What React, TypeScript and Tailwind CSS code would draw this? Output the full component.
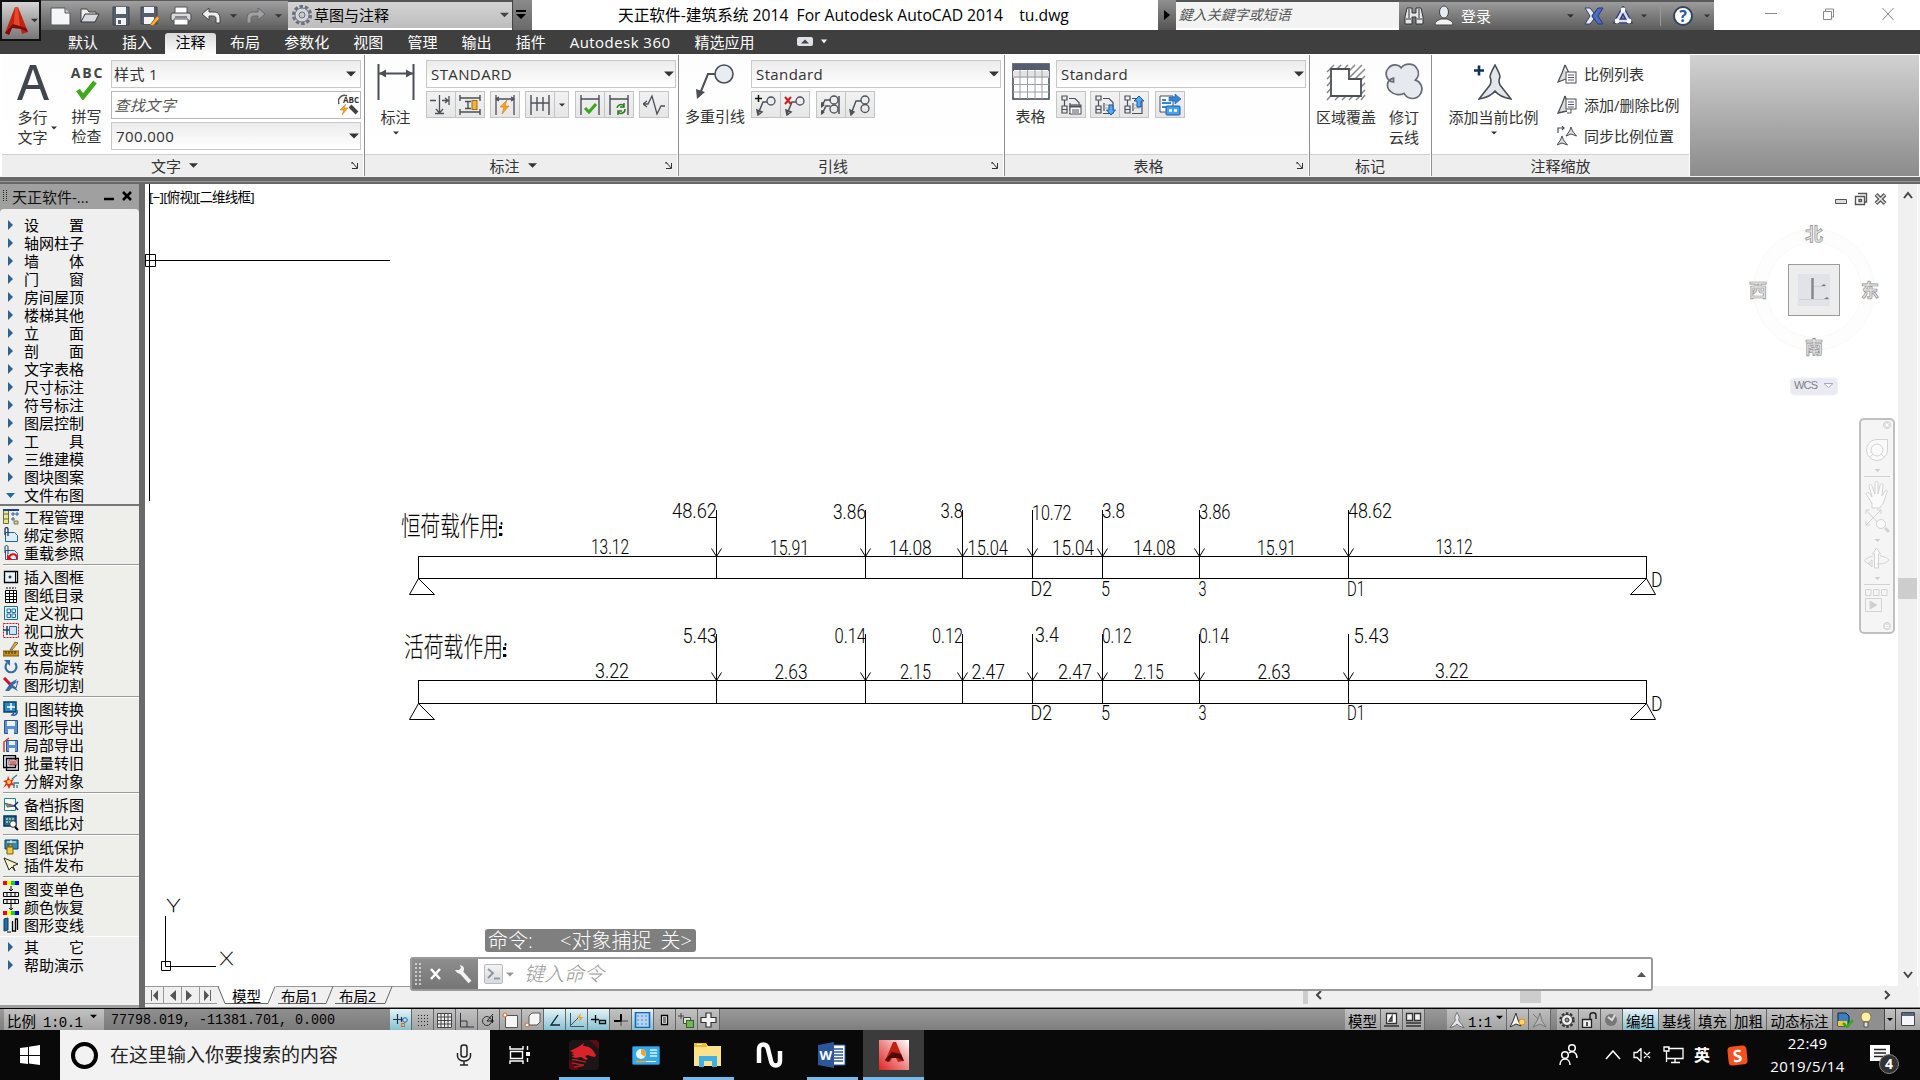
import type { ReactNode } from "react";

type IconProps = { w?: number; h?: number; vw?: number; vh?: number; className?: string; children?: ReactNode };

function Svg({ w = 22, h, vw, vh, className = "", children }: IconProps) {
  const hh = h ?? w;
  return (
    <svg width={w} height={hh} viewBox={`0 0 ${vw ?? w} ${vh ?? hh}`} className={"block shrink-0 " + className} fill="none">
      {children}
    </svg>
  );
}

function Caret({ className = "text-[#333]", w = 9, h = 5 }: { className?: string; w?: number; h?: number }) {
  return (
    <Svg w={w} h={h} vw={10} vh={5} className={className}>
      <path d="M0 0h10L5 5z" fill="currentColor" />
    </Svg>
  );
}

/* ---------- title bar ---------- */

function QuickAccess() {
  return (
    <div className="flex h-[30px] w-[247px] items-center border-t border-[#5a5a5a] bg-gradient-to-b from-[#a0a0a0] to-[#5c5c5c] pl-[9px]">
      <Svg w={22} h={20} className="mr-[7px]">
        <path d="M1 2h14l5 5v12H1z" fill="#f4f6f9" stroke="#555" />
        <path d="M15 2v5h5" stroke="#555" fill="#ccd" />
      </Svg>
      <Svg w={22} h={20} className="mr-[10px]">
        <path d="M2 16V3h6l2 3h7v3" fill="#eee" stroke="#444" />
        <path d="M2 16l4-8h14l-4 8z" fill="#d5d9e0" stroke="#333" />
      </Svg>
      <Svg w={20} h={20} className="mr-[8px]">
        <path d="M2 1h16v18H2z" fill="#565d6b" stroke="#3c4350" />
        <path d="M5 1h10v7H5zM5 12h10v7H5z" fill="#f1f3f6" />
        <path d="M7 14h3v4H7z" fill="#565d6b" />
      </Svg>
      <Svg w={22} h={20} className="mr-[9px]">
        <path d="M2 1h16v17H2z" fill="#565d6b" stroke="#3c4350" />
        <path d="M5 1h10v6H5zM5 11h10v7H5z" fill="#f1f3f6" />
        <path d="M11 19l7-9 3 2-7 8z" fill="#f2b43c" stroke="#a15a1c" />
      </Svg>
      <Svg w={22} h={20} className="mr-[9px]">
        <path d="M5 1h12v7H5z" fill="#fff" stroke="#555" />
        <rect x="1" y="7" width="20" height="8" rx="2" fill="#d8dade" stroke="#444" />
        <path d="M4 13h14v6H4z" fill="#fff" stroke="#555" />
        <path d="M5 11h12" stroke="#333" />
      </Svg>
      <Svg w={20} h={20} className="mr-[9px]">
        <path d="M1 8l7-6v4h5c4 0 6 3 6 6v5h-4v-4c0-2-1-3-3-3H8v4z" fill="#eef0f4" stroke="#444" />
      </Svg>
      <Caret className="mr-[9px] text-[#333]" w={7} h={4} />
      <Svg w={20} h={20} className="mr-[9px]">
        <path d="M19 8l-7-6v4H7c-4 0-6 3-6 6v5h4v-4c0-2 1-3 3-3h4v4z" fill="#9fa1a5" stroke="#666" />
      </Svg>
      <Caret className="text-[#333]" w={7} h={4} />
    </div>
  );
}

function TitleBar() {
  return (
    <div className="flex h-[30px] bg-white pl-[41px] text-[15px] leading-none">
      <QuickAccess />
      <div className="flex h-[28px] w-[224px] items-center border-t-2 border-[#555] bg-gradient-to-b from-[#d4d4d4] to-[#bdbdbd] px-[3px]">
        <Svg w={22} h={22}>
          <circle cx="11" cy="11" r="8.6" stroke="#69707d" strokeWidth="3" strokeDasharray="3.4 2" />
          <circle cx="11" cy="11" r="7" fill="#d3d6db" stroke="#69707d" />
          <circle cx="11" cy="11" r="3" fill="#c9c9c9" stroke="#69707d" />
        </Svg>
        <span className="ml-[1px] grow text-black">草图与注释</span>
        <Caret className="text-[#444]" w={9} h={6} />
      </div>
      <div className="flex h-[30px] w-[20px] items-center justify-center border-l border-[#444] bg-gradient-to-b from-[#8a8a8a] to-[#6a6a6a] pr-[4px]">
        <Svg w={10} h={10}>
          <path d="M0 0h10v2H0zM0 4h10L5 9z" fill="#000" />
        </Svg>
      </div>
      <div className="flex h-[30px] w-[626px] items-center pl-[86px] text-[16px] text-black">
        <span className="origin-left scale-x-[0.980] whitespace-pre">天正软件-建筑系统 2014  For Autodesk AutoCAD 2014    tu.dwg</span>
      </div>
      <div className="flex h-[30px] w-[18px] items-center justify-center bg-gradient-to-b from-[#909090] to-[#555]">
        <Svg w={6} h={10}>
          <path d="M0 0v10l6-5z" fill="#000" />
        </Svg>
      </div>
      <div className="flex h-[28px] w-[223px] items-center border-t-2 border-[#555] bg-[#f3f3f3] pl-[4px] text-[14px] text-[#555]">
        <span className="block [transform:skewX(-16deg)]">鍵入关鍵字或短语</span>
      </div>
      <div className="flex h-[30px] w-[315px] items-center border-t-2 border-[#5a5a5a] bg-gradient-to-b from-[#9c9c9c] to-[#5c5c5c]">
        <Svg w={20} h={20} className="ml-[5px]">
          <path d="M3 2h5v5h4V2h5l2 9v7h-7v-7H8v7H1v-7z" fill="#e2e6ea" stroke="#333" />
          <path d="M2 13h5M13 13h5M5 3v9M15 3v9" stroke="#333" />
        </Svg>
        <Svg w={20} h={22} className="ml-[10px]">
          <ellipse cx="10" cy="7" rx="4.5" ry="6" fill="#e4ebf2" stroke="#444" />
          <path d="M1 20c0-4 4-5 6-6h6c2 1 6 2 6 6z" fill="#f3f3f3" stroke="#444" />
        </Svg>
        <span className="ml-[7px] w-[106px] text-white">登录</span>
        <Caret className="text-[#333]" w={7} h={4} />
        <Svg w={20} h={18} className="ml-[10px]">
          <path d="M1 1h5l4 5-2 3 2 3-4 5H1l5-8z" fill="#e4e9f5" stroke="#33406c" />
          <path d="M19 1h-5l-6 8 6 8h5l-5-8z" fill="#4c6cc0" stroke="#25397a" />
        </Svg>
        <Svg w={20} h={20} className="ml-[9px]">
          <path d="M10 4L4 15h12z" stroke="#2c3a73" strokeWidth="5" />
          <path d="M10 4L4 15h12z" stroke="#d6def5" strokeWidth="2.6" />
          <circle cx="10" cy="4" r="2.4" fill="#fff" />
          <circle cx="4" cy="15" r="2.4" fill="#fff" />
          <circle cx="16" cy="15" r="2.4" fill="#fff" />
        </Svg>
        <Caret className="ml-[8px] text-[#333]" w={6} h={4} />
        <div className="ml-[13px] h-[20px] w-px bg-[#999]" />
        <div className="ml-[12px] flex size-[20px] items-center justify-center rounded-full border-2 border-[#33445e] bg-white text-[16px] font-bold text-[#2457b8]">?</div>
        <Caret className="ml-[11px] text-[#333]" w={6} h={4} />
      </div>
      <Svg w={206} h={30}>
        <path d="M51 13.500h12M109.500 11.500h8v8h-8zM111.500 11v-2h8v8h-2M168.500 8l11 12M179.500 8l-11 12" stroke="#888" />
      </Svg>
    </div>
  );
}

function AppButton() {
  return (
    <div className="absolute top-0 left-0 flex h-[41px] w-[41px] items-center border-2 border-[#111] bg-gradient-to-b from-[#d5d5d5] to-[#777] pl-[2px]">
      <Svg w={25} h={30} vw={25} vh={30}>
        <path d="M11 1h3l10 25-6 2-2-7-8 1-3 7-4-2z" fill="#c5220f" />
        <path d="M11 1l3 0 2 20-8 1 2-5z" fill="#e4492c" />
        <path d="M1 27l8-9 13 4 2 4-7-3-9-1-3 7z" fill="#7a0d08" />
      </Svg>
      <Caret className="ml-[2px] text-[#333]" w={7} h={5} />
    </div>
  );
}

const tabsLeft = ["默认", "插入"];
const tabsRight = ["布局", "参数化", "视图", "管理", "输出", "插件", "Autodesk 360", "精选应用"];

function TabBar() {
  return (
    <div className="flex h-[24px] items-center bg-[#3f3f3f] pl-[56px] text-[15px] leading-none text-white">
      {tabsLeft.map((t) => (
        <span key={t} className="px-[12px] pt-px">{t}</span>
      ))}
      <span className="mt-[3px] ml-[1px] flex h-[21px] w-[51px] items-center justify-center rounded-t-[3px] bg-gradient-to-b from-[#d9d9d9] to-white pb-[2px] text-black">注释</span>
      <span className="w-[2px]" />
      {tabsRight.map((t) => (
        <span key={t} className={"px-[12.050px] pt-px whitespace-nowrap " + (t.startsWith("A") ? "tracking-[0.450px]" : "")}>{t}</span>
      ))}
      <Svg w={30} h={10} className="ml-[30px]">
        <rect width="16" height="9" rx="2" fill="#dfe1e6" />
        <path d="M4 6.500h8L8 2.500z" fill="#444" />
        <path d="M24 2.500h6l-3 4z" fill="#fff" />
      </Svg>
    </div>
  );
}

/* ---------- ribbon ---------- */

function Combo({ text, search = false, inset = false }: { text: string; search?: boolean; inset?: boolean }) {
  return (
    <div className={"flex h-[28px] w-[250px] items-center border text-[15px] tracking-[0.400px] " + (inset ? "pl-[2px] " : "pl-[4px] ") + (search ? "border-[#b9b9b9] bg-white text-[14px] text-[#555]" : "border-[#c9c9c9] bg-gradient-to-b from-[#ececec] to-white text-[#333]")}>
      <span className={search ? "block [transform:skewX(-16deg)]" : ""}>{text}</span>
      <span className="grow" />
      {search ? (
        <Svg w={22} h={22}>
          <path d="M1 10a6 6 0 0 1 8-8" stroke="#555" strokeWidth="1.500" />
          <text x="5" y="9" fontSize="8" fontWeight="700" fill="#333" letterSpacing="0">ABC</text>
          <path d="M8 10l-6 6h4l-2 5 6-7H6z" fill="#f5a623" stroke="#c86a10" strokeWidth=".5" />
          <path d="M12 12l7 7" stroke="#444" strokeWidth="4" />
        </Svg>
      ) : (
        <Caret w={10} h={6} className={inset ? "mr-[4px] text-[#333]" : "mr-px text-[#333]"} />
      )}
    </div>
  );
}

function Btn({ children, w = "w-[30px]" }: { children: ReactNode; w?: string }) {
  return (
    <div className={"-mr-px flex h-[27px] items-center justify-center border border-[#c4c4c4] bg-gradient-to-b from-[#f2f2f2] to-[#e6e6e6] " + w}>{children}</div>
  );
}

function Panel({ title, width, menu = false, launcher = false, children }: { title: string; width: string; menu?: boolean; launcher?: boolean; children: ReactNode }) {
  return (
    <section className={"flex flex-col border-r border-[#8f8f8f] " + width}>
      <div className="flex h-[100px] grow bg-gradient-to-b from-[#fdfdfd] to-white">{children}</div>
      <div className="mr-px flex h-[22px] items-center justify-center border-t border-[#d0d0d0] bg-[#eeeeee] text-[15px] text-[#333]">
        <span className={"flex grow items-center justify-center gap-[8px] " + (launcher ? "pr-[4px]" : "")}>
          {title}
          {menu && <Caret w={9} h={5} />}
        </span>
        {launcher && (
          <Svg w={7} h={7} className="mr-[5px]">
            <path d="M0 1h2M1 0l5 6M6.500 1v5.500H1" stroke="#333" />
          </Svg>
        )}
      </div>
    </section>
  );
}

const ink = "#4a4f58";

function IconDim({ kind }: { kind: string }) {
  return (
    <Svg w={22} h={22}>
      {kind === "jog" && <path d="M0 6.500h6M9.500 1v18M5 19.500h9M6 15l3.500 4 3.500-4M12 6.500h6M15 4l3 2.500-3 2.500M19 2v9" stroke={ink} strokeWidth="1.300" />}
      {kind === "quick" && (
        <>
          <path d="M1 1v6M21 1v6M1 4h20M1 15v6M21 15v6M1 18h20M6 7.500h6M6 14.500h6M9 7.500v7" stroke={ink} strokeWidth="1.400" />
          <rect x="13" y="6.500" width="5" height="9" fill="#f0b43a" stroke="#a26a12" />
        </>
      )}
      {kind === "flash" && (
        <>
          <path d="M2 1v20M20 1v20M2 5h18M5 3L2 5l3 2M17 3l3 2-3 2" stroke={ink} strokeWidth="1.300" />
          <path d="M13 6l-7 7h4l-2 7 7-8h-4z" fill="#f6a21d" stroke="#d47a10" strokeWidth=".6" />
        </>
      )}
      {kind === "cont" && <path d="M2 1v20M8 3v14M14 3v14M20 1v20M2 9h18" stroke={ink} strokeWidth="1.400" />}
      {kind === "check" && (
        <>
          <path d="M2 1v20M20 1v20M2 5h18" stroke={ink} strokeWidth="1.400" />
          <path d="M6 14l4 4 7-8" stroke="#3aa61a" strokeWidth="3" />
        </>
      )}
      {kind === "update" && (
        <>
          <path d="M2 1v20M20 1v20M2 5h18" stroke={ink} strokeWidth="1.400" />
          <path d="M9 14a4 4 0 0 1 7-2M17 15a4 4 0 0 1-7 3M16 9v4h-4M10 21v-4h4" stroke="#2c7a1e" strokeWidth="1.500" />
        </>
      )}
      {kind === "wave" && <path d="M0 10h5l4-8 5 18 4-8h4M0 10l4-3M0 10l4 3" stroke={ink} strokeWidth="1.300" />}
    </Svg>
  );
}

function IconLeader({ kind }: { kind: string }) {
  return (
    <Svg w={22} h={22}>
      {kind === "two" && (
        <>
          <path d="M2 12l3-6h6M2 20l4-8h4M2 12l0-4M2 20l0-4M19 2v18" stroke={ink} strokeWidth="1.500" />
          <circle cx="14" cy="6" r="4" stroke={ink} strokeWidth="1.300" />
          <circle cx="14" cy="15" r="4" stroke={ink} strokeWidth="1.300" />
          <path d="M1 9l4 2-4 3zM1 17l4 1-4 3z" fill={ink} />
        </>
      )}
      {kind === "eight" && (
        <>
          <path d="M2 20L7 7h5M1 16l1 5 3-3z" stroke={ink} strokeWidth="1.400" />
          <circle cx="16" cy="6" r="4" stroke={ink} strokeWidth="1.300" />
          <circle cx="16" cy="14.500" r="4" stroke={ink} strokeWidth="1.300" />
        </>
      )}
      {(kind === "add" || kind === "del") && (
        <>
          <path d="M3 20l5-12h4M2 16l1 5 4-3z" stroke={ink} strokeWidth="1.500" />
          <circle cx="16" cy="7" r="4" fill="#e9edf2" stroke={ink} strokeWidth="1.300" />
          {kind === "add" ? <path d="M0 4.500h7M3.500 1v7" stroke="#111" strokeWidth="1.500" /> : <path d="M1 3l6 7M7 3l-6 7" stroke="#c81e1e" strokeWidth="2" />}
        </>
      )}
    </Svg>
  );
}

function IconLink({ kind }: { kind: string }) {
  const blue = "#2f86dd";
  return (
    <Svg w={22} h={22}>
      {kind !== "data" && <path d="M2 2h5v4H2zM2 12h5v7H2zM4.500 6v6M2 15.500h5M9 4.500h6l4 4v11H9M10 9v8" stroke={ink} strokeWidth="1.200" />}
      {kind !== "data" && <path d="M10 11h7M10 14h7" stroke="#aaa" />}
      {kind === "link" && (
        <>
          <rect x="10" y="11" width="11" height="9" fill="#fff" stroke={ink} />
          <path d="M10 12.500h11" stroke={ink} strokeWidth="2" />
          <path d="M12 16h7M12 18h7" stroke={ink} />
        </>
      )}
      {kind === "down" && <path d="M15 11h4v5h2.500l-4.500 5-4.500-5H15z" fill="#55a9f0" stroke="#145aa8" />}
      {kind === "up" && <path d="M14 13h4V7h3l-5-5-5 5h3z" fill="#55a9f0" stroke="#145aa8" />}
      {kind === "data" && (
        <>
          <path d="M1 2h13v16H1z" fill="#fff" stroke={ink} />
          <path d="M3 6h4M3 9h9M3 13h4" stroke={blue} strokeWidth="2" />
          <path d="M10 3h6V0l6 5-6 5V7h-6z" fill={blue} stroke="#145aa8" strokeWidth=".6" />
          <rect x="7" y="12" width="14" height="9" rx="1" fill="#4aa0ec" stroke="#145aa8" />
          <path d="M10 16.500h3M15 16.500h3" stroke="#fff" strokeWidth="2.500" />
        </>
      )}
    </Svg>
  );
}

function ScaleFigure({ w, h }: { w: number; h: number }) {
  return (
    <Svg w={w} h={h} vw={34} vh={36}>
      <path d="M17 1c2 4 5 9 5 12-1 3-2 4 0 8l11 14c-6-1-13-4-16-8-3 4-10 7-16 8l11-14c2-4 1-5 0-8 0-3 3-8 5-12z" fill="#e3e6ea" stroke={ink} strokeWidth="1.600" />
    </Svg>
  );
}

function Ribbon() {
  return (
    <div className="flex h-[123px] border-t border-b border-t-white border-b-[#f5f5f5] bg-white pl-[2px] text-[15px] leading-[20px] text-[#333]">
      <Panel title="文字" width="w-[363px]" menu launcher>
        <div className="flex w-[61px] flex-col items-center pt-[10px]">
          <Svg w={34} h={36} vw={34} vh={36} className="overflow-visible">
            <path d="M1 35L14 0h6l13 35h-5l-4-11H10L6 35zM11.500 20h11L17 4z" fill="#41464e" fillRule="evenodd" />
          </Svg>
          <div className="mt-[6px] flex items-center">
            <div className="text-center">多行<br />文字</div>
            <div className="-mr-[9px] ml-[3px] pt-[2px]"><Caret w={6} h={4} /></div>
          </div>
        </div>
        <div className="flex w-[47px] flex-col items-center pt-[12px]">
          <div className="h-[11px] pl-[2px] text-[14px] leading-[11px] font-bold tracking-[1.800px] text-[#444]">ABC</div>
          <Svg w={24} h={20} className="mt-[2px]">
            <path d="M3 10l5 7L20 2" stroke="#3fab1c" strokeWidth="4.500" />
          </Svg>
          <div className="mt-[6px] text-center">拼写<br />检查</div>
        </div>
        <div className="flex flex-col gap-[3px] pt-[5px] pl-[1px]">
          <Combo text="样式 1" inset />
          <Combo text="查找文字" search />
          <Combo text="700.000" />
        </div>
      </Panel>
      <Panel title="标注" width="w-[314px]" menu launcher>
        <div className="flex w-[61px] flex-col items-center pt-[9px]">
          <Svg w={38} h={36}>
            <path d="M1.500 0v36M36.500 0v36M2 9.500h34" stroke={ink} strokeWidth="2" />
            <path d="M2 9.500l7-4v8zM36 9.500l-7-4v8z" fill={ink} />
          </Svg>
          <div className="mt-[7px]">标注</div>
          <Caret className="mt-[4px] text-[#333]" w={6} h={4} />
        </div>
        <div className="pt-[5px]">
          <Combo text="STANDARD" />
          <div className="mt-[3px] flex">
            <Btn><IconDim kind="jog" /></Btn>
            <Btn><IconDim kind="quick" /></Btn>
            <div className="w-[6px]" />
            <Btn><IconDim kind="flash" /></Btn>
            <div className="w-[6px]" />
            <Btn><IconDim kind="cont" /></Btn>
            <Btn w="w-[15px]"><Caret w={6} h={4} /></Btn>
            <div className="w-[7px]" />
            <Btn><IconDim kind="check" /></Btn>
            <Btn><IconDim kind="update" /></Btn>
            <div className="w-[6px]" />
            <Btn><IconDim kind="wave" /></Btn>
          </div>
        </div>
      </Panel>
      <Panel title="引线" width="w-[326px]" launcher>
        <div className="flex w-[72px] flex-col items-center pt-[9px]">
          <Svg w={38} h={36}>
            <path d="M3 32L12 10h7" stroke={ink} strokeWidth="2" />
            <path d="M0 25l1 10 8-7z" fill={ink} />
            <circle cx="28" cy="10" r="9" fill="#e8edf2" stroke={ink} strokeWidth="1.600" />
          </Svg>
          <div className="mt-[6px] whitespace-nowrap">多重引线</div>
        </div>
        <div className="pt-[5px]">
          <Combo text="Standard" />
          <div className="mt-[3px] flex">
            <Btn><IconLeader kind="add" /></Btn>
            <Btn><IconLeader kind="del" /></Btn>
            <div className="w-[7px]" />
            <Btn><IconLeader kind="two" /></Btn>
            <Btn><IconLeader kind="eight" /></Btn>
          </div>
        </div>
      </Panel>
      <Panel title="表格" width="w-[305px]" launcher>
        <div className="flex w-[51px] flex-col items-center pt-[8px]">
          <Svg w={38} h={38}>
            <rect x="1" y="1" width="36" height="35" fill="#fff" stroke={ink} strokeWidth="1.600" />
            <path d="M1 1h36v6H1z" fill="#555d70" />
            <path d="M1 15h36v-7H1z" fill="#e3e3e3" />
            <path d="M8 7v29M15.500 7v29M23 7v29M30 7v29M1 14h36M1 21.500h36M1 29h36" stroke="#9a9ea6" />
          </Svg>
          <div className="mt-[5px]">表格</div>
        </div>
        <div className="pt-[5px]">
          <Combo text="Standard" />
          <div className="mt-[3px] flex">
            <Btn><IconLink kind="link" /></Btn>
            <div className="w-[5px]" />
            <Btn><IconLink kind="down" /></Btn>
            <Btn><IconLink kind="up" /></Btn>
            <div className="w-[7px]" />
            <Btn><IconLink kind="data" /></Btn>
          </div>
        </div>
      </Panel>
      <Panel title="标记" width="w-[122px]">
        <div className="flex w-[71px] flex-col items-center pt-[9px] pl-[1px]">
          <Svg w={40} h={38}>
            <path d="M1 8l7-7M1 15L15 1M1 22l6-7M1 29l6-7M1 36l6-7M9 36l4-4M16 36l4-4M23 36l4-4M30 36l4-4M35 36l4-5M22 1l-3 3M29 1l-6 6M36 1l-12 12M39 5L29 15M39 12l-5 5M39 19l-5 5M39 26l-5 5" stroke="#888" strokeWidth="1.500" />
            <path d="M5 5h18v10h12v17H5z" fill="#fff" stroke={ink} strokeWidth="1.800" />
          </Svg>
          <div className="mt-[5px] whitespace-nowrap">区域覆盖</div>
        </div>
        <div className="flex w-[46px] flex-col items-center pt-[7px]">
          <Svg w={40} h={40}>
            <path d="M9 20C1 19-1 10 4 5 8 0 15 2 17 5 21 0 30 0 33 5c4 5 2 10-1 13 6 2 9 9 5 15-4 6-13 6-17-1-4 2-10 2-14-2-5-4-5-12 3-14z" transform="translate(1 1) scale(.95)" fill="#e6e9ed" stroke="#666b75" strokeWidth="1.800" />
          </Svg>
          <div className="mt-[5px] text-center">修订<br />云线</div>
        </div>
      </Panel>
      <section className="flex w-[257px] flex-col">
        <div className="flex h-[100px] grow">
          <div className="flex w-[123px] flex-col items-center pt-[9px]">
            <div className="flex pr-[2px]">
              <Svg w={10} h={14}><path d="M0 6.500h10M5 1.500v10" stroke="#12305c" strokeWidth="2.600" /></Svg>
              <div className="-ml-[6px]"><ScaleFigure w={34} h={36} /></div>
            </div>
            <div className="mt-[7px] whitespace-nowrap">添加当前比例</div>
            <Caret className="mt-[4px] text-[#333]" w={6} h={4} />
          </div>
          <div className="flex flex-col gap-[11px] pt-[9px] pl-[2px]">
            <div className="flex items-center gap-[7px]">
              <Svg w={20} h={20}>
                <path d="M8 1l4 8M8 1L5 9l-4 9 8-3" stroke={ink} strokeWidth="1.300" fill="#ddd" />
                <rect x="9" y="8" width="10" height="11" fill="#fff" stroke={ink} />
                <path d="M11 11h6M11 13.500h6M11 16h6" stroke="#557" />
              </Svg>
              比例列表
            </div>
            <div className="flex items-center gap-[7px] whitespace-nowrap">
              <Svg w={20} h={20}>
                <path d="M8 1l2 5M8 1L5 9l-4 9 9-2" stroke={ink} strokeWidth="1.300" fill="#ddd" />
                <rect x="9" y="4" width="10" height="10" fill="#fff" stroke={ink} />
                <path d="M11 7h6M11 9.500h6M11 12h6M14 14v4h-4" stroke="#557" />
              </Svg>
              添加/删除比例
            </div>
            <div className="flex items-center gap-[7px] whitespace-nowrap">
              <Svg w={20} h={20}>
                <path d="M1 7V2h6M5 0l2 2-2 2" stroke={ink} strokeWidth="1.200" />
                <path d="M14 1l1.500 4 4 5-5.500-2-5 2 3.500-5zM5 10l1.500 4 4 5L5 17l-5 2 3.500-5z" stroke={ink} fill="#ddd" />
              </Svg>
              同步比例位置
            </div>
          </div>
        </div>
        <div className="flex h-[22px] items-center justify-center border-t border-[#d0d0d0] bg-[#eeeeee]">注释缩放</div>
      </section>
      <div className="ml-[1px] w-[229px] bg-gradient-to-b from-[#d2d2d2] to-[#8c8c8c]" />
    </div>
  );
}

/* ---------- left palette ---------- */

const topMenu = ["设 置", "轴网柱子", "墙 体", "门 窗", "房间屋顶", "楼梯其他", "立 面", "剖 面", "文字表格", "尺寸标注", "符号标注", "图层控制", "工 具", "三维建模", "图块图案"];

const toolGroups: string[][] = [
  ["工程管理", "绑定参照", "重载参照"],
  ["插入图框", "图纸目录", "定义视口", "视口放大", "改变比例", "布局旋转", "图形切割"],
  ["旧图转换", "图形导出", "局部导出", "批量转旧", "分解对象"],
  ["备档拆图", "图纸比对"],
  ["图纸保护", "插件发布"],
  ["图变单色", "颜色恢复", "图形变线"],
];

const rainbow = (y: number) => (
  <>
    <path d={`M0 ${y}h4v4H0z`} fill="#f00" />
    <path d={`M4 ${y}h4v4H4z`} fill="#ff0" />
    <path d={`M8 ${y}h4v4H8z`} fill="#0d0" />
    <path d={`M12 ${y}h4v4h-4z`} fill="#00f" />
  </>
);

const toolIcons: Record<string, ReactNode> = {
  工程管理: <><path d="M.5 1.500h5v13h-5zM.5 5h5M.5 10h5" stroke="#6b6f2a" fill="#e8e79a" /><path d="M0 1h16" stroke="#1c3f94" strokeWidth="2" /><path d="M9 4h2v2H9zM13 4h2v2h-2zM9 9h2v2H9z" stroke="#345f9f" /><path d="M11 12h4v3h-4z" fill="#e8d43a" stroke="#777" /></>,
  绑定参照: <><path d="M2.500 5.500h9l3 3v6h-12z" fill="#dcecf8" stroke="#2c5f96" /><path d="M2 8V2c0-2 3-2 3 0v7" stroke="#123a6c" strokeWidth="1.300" /></>,
  重载参照: <><path d="M2.500 5.500h9l3 3v6h-12z" fill="#dcecf8" stroke="#2c5f96" /><path d="M2 8V2c0-2 3-2 3 0v7" stroke="#123a6c" /><path d="M14 14c0-6-6-6-8-2" stroke="#e01010" strokeWidth="2" /><path d="M4 9v6h6z" fill="#e01010" /></>,
  插入图框: <><path d="M1.500 2.500h13v11h-13z" fill="#e3f3fd" stroke="#000" strokeWidth="1.300" /><path d="M12.500 2v12M5.500 8h3M7 6.500v3" stroke="#000" /></>,
  图纸目录: <><path d="M2.500 3.500h11v12h-11zM2 6.500h12M2 9.500h12M2 12.500h12M6.500 3v12M10.500 3v12" stroke="#000" fill="#fff" /><path d="M3 1h10" stroke="#000" strokeDasharray="2 1" /></>,
  定义视口: <path d="M1.500 1.500h13v13h-13zM4 4h3.500v3.500H4zM9 4h3.500v3.500H9zM4 9h3.500v3.500H4zM9 9h3.500v3.500H9z" stroke="#1d6a9b" fill="#e6f3fa" />,
  视口放大: <><rect x=".5" y=".5" width="15" height="14" stroke="#d01010" strokeDasharray="2 1" /><path d="M6.500 3.500h7v8h-7z" fill="#cfe3f5" stroke="#345f9f" /><path d="M0 7h6M4 3v9" stroke="#1a3c78" strokeWidth="1.500" /></>,
  改变比例: <><path d="M0 10h16v5H0z" fill="#c98f1e" stroke="#7a5410" /><path d="M3 10v3M6 10v3M9 10v3M12 10v3" stroke="#3c2806" /><path d="M7 9l5-8 3 1-6 7z" fill="#e8a82c" stroke="#333" strokeWidth=".6" /></>,
  布局旋转: <><path d="M4 4a5.500 5.500 0 1 0 8 0" stroke="#2f6ea8" strokeWidth="2.200" /><path d="M1 1h6v6z" fill="#2f6ea8" /></>,
  图形切割: <><path d="M2 14l4-6-3-4 4 2 7-4-3 6 4 6-6-3-3 3z" fill="#3a6aa4" /><path d="M1 1l6 6" stroke="#d0102a" strokeWidth="3" /><path d="M9 8l6-4-2 7z" fill="#e8eef5" stroke="#345f9f" /></>,
  旧图转换: <><path d="M1 1h12v10H1z" fill="#2b8bbf" stroke="#0b3f66" strokeWidth="1.500" /><path d="M4 6h8M8 2v7" stroke="#fff" strokeWidth="1.500" /><path d="M14 9c1 4-2 6-5 5l2-2" stroke="#345f9f" strokeWidth="1.600" /></>,
  图形导出: <><path d="M1.500 1.500h13v13h-13z" fill="#5b8fd0" stroke="#2d5290" /><path d="M4 2h8v5H4zM5 10h6v5H5z" fill="#eaf1fa" /></>,
  局部导出: <><path d="M3.500 3.500h11v11h-11z" fill="#5b8fd0" stroke="#2d5290" /><path d="M6 4h6v4H6zM6 11h6v4H6z" fill="#eaf1fa" /><path d="M1 15V5l5-4" stroke="#d23b2c" strokeWidth="1.500" /></>,
  批量转旧: <><path d="M.5.500h12v12H.5zM3.500 3.500h12v12h-12z" fill="#dfe8f5" stroke="#000" strokeWidth="1.300" /><path d="M6 5h8v5H6z" fill="#fff" stroke="#800" strokeWidth=".7" /><path d="M7 7h6M7 9h6" stroke="#800" /></>,
  分解对象: <><path d="M0 15l3-5-3-2 4-1 1-4 2 4 4-1-2 3 3 4-4-1-2 4-2-4z" fill="#e2311b" /><circle cx="6" cy="9" r="2" fill="#ffcf3a" /><path d="M9 6l5-4M11 15v-5h5M14 15v-3" stroke="#2d7f9a" strokeWidth="1.300" /></>,
  备档拆图: <><path d="M1.500 1.500h11v12h-11z" fill="#fff" stroke="#1e8a8a" /><path d="M1 6l12 3-9 1" stroke="#555" fill="#888" /><path d="M11 9l4-4M11 8l4 5" stroke="#102c80" strokeWidth="1.500" /></>,
  图纸比对: <><path d="M1 1h12v10H1z" fill="#25747c" stroke="#072f6c" strokeWidth="1.500" /><path d="M3 4h8M3 7h6" stroke="#fff" strokeDasharray="2 1" /><circle cx="10" cy="9" r="3.300" fill="#fff" stroke="#333" /><path d="M12 12l3 3" stroke="#000" strokeWidth="2" /></>,
  图纸保护: <><path d="M2 1h13v9H2z" fill="#2890b5" stroke="#0b3f66" /><path d="M4 3h9M8 1v6" stroke="#fff" /><path d="M4 8h6v7H4z" fill="#f0c93c" stroke="#7a5c10" /><path d="M5 8V5h4v3" stroke="#7a5c10" strokeWidth="1.300" /></>,
  插件发布: <path d="M1 1l14 6-5 2 2 5-3-4-3 3z" fill="#f7f3c4" stroke="#222" />,
  图变单色: <>{rainbow(0)}<path d="M8 5v5M6 8l2 2 2-2M.5 11.500h15v4H.5zM4 11v4M8 11v4M12 11v4" stroke="#000" /></>,
  颜色恢复: <>{rainbow(12)}<path d="M8 5v6M6 9l2 2 2-2M.5.500h15v4H.5zM4 0v4M8 0v4M12 0v4" stroke="#000" /></>,
  图形变线: <><path d="M1 2l4-1v12l-4 1z" fill="#1f6f9f" stroke="#0b3f66" /><path d="M9.500 4v10h3V2h2v11" stroke="#000" strokeWidth="1.300" /><path d="M4 15h4" stroke="#000" /></>,
};

function MenuRow({ label, open = false }: { label: string; open?: boolean }) {
  return (
    <div className="flex h-[18px] items-center">
      <div className="flex w-[24px] items-center pl-[6px]">
        {open ? (
          <Svg w={9} h={5}><path d="M0 0h9L4.500 5z" fill="#1f6ba0" /></Svg>
        ) : (
          <Svg w={9} h={10}><path d="M2 0v10l5-5z" fill="#2b6394" /></Svg>
        )}
      </div>
      <div className="flex w-[60px] justify-between whitespace-nowrap">
        {label.split(" ").map((s) => <span key={s}>{s}</span>)}
      </div>
    </div>
  );
}

function Palette() {
  return (
    <aside className="flex h-[824px] w-[145px] shrink-0 flex-col border-r-[6px] border-[#696969] bg-[#a0a0a0] text-[15px] leading-[18px] text-black">
      <div className="flex h-[25px] items-center text-[#111]">
        <Svg w={6} h={22} className="ml-[2px]">
          <path d="M1.500 4v12M4.500 4v12" stroke="#222" strokeDasharray="1 1" />
        </Svg>
        <span className="ml-[4px] w-[91px]">天正软件-...</span>
        <Svg w={30} h={12} className="ml-[1px]">
          <path d="M0 8h10" stroke="#000" strokeWidth="2.500" />
          <path d="M19 1l8 8M27 1l-8 8" stroke="#000" strokeWidth="2.500" />
        </Svg>
      </div>
      <div className="flex h-[796px] flex-col rounded-t-[4px] bg-[#efefef] pt-[7px]">
        {topMenu.map((m) => <MenuRow key={m} label={m} />)}
        <MenuRow label="文件布图" open />
        <div className="bg-[#eeeeea]">
          <div className="h-[4px] border-t-2 border-[#777]" />
          {toolGroups.map((g, gi) => (
            <div key={g[0]}>
              {gi > 0 && <div className="flex h-[6px] items-center"><div className="ml-[3px] h-[2px] grow border-t border-b border-t-[#9a9a9a] border-b-white" /></div>}
              {g.map((t) => (
                <div key={t} className="flex h-[18px] items-center">
                  <Svg w={16} h={16} className="mx-[3px] mr-[5px]">{toolIcons[t]}</Svg>
                  <span>{t}</span>
                </div>
              ))}
            </div>
          ))}
          <div className="h-[3px] border-b border-white" />
        </div>
        <div className="mt-px"><MenuRow label="其 它" /></div>
        <MenuRow label="帮助演示" />
      </div>
    </aside>
  );
}

/* ---------- drawing area ---------- */

type Label = [string, number, number, number];

const labels: Label[] = [
  ["48.62", 672, 717, 518], ["3.86", 833, 866, 519], ["3.8", 940.5, 963, 518], ["10.72", 1032, 1071.500, 520],
  ["3.8", 1102, 1125, 518], ["3.86", 1199, 1230.500, 519], ["48.62", 1348, 1392, 518],
  ["13.12", 591, 629, 554], ["15.91", 770, 809, 555], ["14.08", 889, 931.7, 555], ["15.04", 967.5, 1008, 555],
  ["15.04", 1052, 1094, 555], ["14.08", 1133, 1175.500, 555], ["15.91", 1257, 1296, 555], ["13.12", 1435.500, 1472.600, 554],
  ["D2", 1030.500, 1052, 596], ["5", 1101, 1110, 596], ["3", 1198.500, 1206.500, 596], ["D1", 1347, 1365, 596], ["D", 1651, 1662.500, 587],
  ["5.43", 682.5, 717, 643], ["0.14", 834.5, 866, 643], ["0.12", 932, 963, 643], ["3.4", 1035, 1059, 642],
  ["0.12", 1102, 1131.500, 643], ["0.14", 1199, 1229, 643], ["5.43", 1353.500, 1389, 643],
  ["3.22", 595, 629, 678], ["2.63", 774.5, 807.5, 679], ["2.15", 900, 931, 679], ["2.47", 971.5, 1005, 679],
  ["2.47", 1058, 1092, 679], ["2.15", 1134, 1163.700, 679], ["2.63", 1257.500, 1290.600, 679], ["3.22", 1435, 1468.600, 678],
  ["D2", 1030.500, 1052, 720], ["5", 1101, 1110, 720], ["3", 1198.500, 1206.500, 720], ["D1", 1347, 1365, 720], ["D", 1651, 1662.500, 711],
];

const loadX = [716.5, 865.5, 962.5, 1032.500, 1102.500, 1199.500, 1348.500];

function Beam({ top, bottom, arrowTop }: { top: number; bottom: number; arrowTop: number }) {
  return (
    <g>
      <rect x="418.500" y={top} width="1228" height={bottom - top} />
      {loadX.map((x) => (
        <path key={x} d={`M${x} ${arrowTop}V${bottom}M${x - 5} ${top - 8}L${x} ${top}L${x + 5} ${top - 8}`} />
      ))}
      <path d={`M418.500 ${bottom}L409.500 ${bottom + 16}H434.500Z`} />
      <path d={`M1646.500 ${bottom}L1630.500 ${bottom + 16}H1655.500Z`} />
    </g>
  );
}

function Drawing() {
  return (
    <svg className="absolute top-0 left-0" width="1753" height="803" viewBox="145 184 1753 803" fill="none" stroke="#000" strokeWidth="1">
      <path d="M149.500 184V501M145 260.500H390M145.500 254.500h10v12h-10z" />
      <path d="M165.500 916V966.500H216M161.500 961.500h9v9h-9z" />
      <Beam top={556.5} bottom={578.5} arrowTop={510} />
      <Beam top={680.5} bottom={703.5} arrowTop={634} />
      <g fill="#000" stroke="none" className="font-[Roboto]" fontWeight="300" fontSize="19.500">
        {labels.map(([t, x1, x2, y], i) => (
          <text key={i} x={x1} y={y} textLength={x2 - x1} lengthAdjust="spacingAndGlyphs">{t}</text>
        ))}
      </g>
      <g fill="#000" stroke="#000" strokeWidth=".35" className="font-[Roboto]" fontWeight="100" fontSize="19">
        <text x="166.500" y="912" textLength="14" lengthAdjust="spacingAndGlyphs">Y</text>
        <text x="219.500" y="965" textLength="14" lengthAdjust="spacingAndGlyphs">X</text>
      </g>
      <g fill="#000" stroke="none" fontWeight="300" fontSize="27" style={{ fontFamily: '"Noto Sans CJK SC", sans-serif' }}>
        <text x="401" y="535.500" textLength="103" lengthAdjust="spacingAndGlyphs">恒荷载作用:</text>
        <text x="404" y="657" textLength="104" lengthAdjust="spacingAndGlyphs">活荷载作用:</text>
      </g>
      <path d="M499 526h3v3h-3zM499 533h3v3h-3zM503 647h3v3h-3zM503 654h3v3h-3z" fill="#000" stroke="none" />
      <g>
        <circle cx="1814" cy="290" r="54" stroke="#fdfdfd" strokeWidth="13" />
        <circle cx="1814" cy="290" r="60.500" stroke="#f9f9f9" />
        <circle cx="1814" cy="290" r="47.500" stroke="#f9f9f9" />
        <rect x="1788.500" y="264.500" width="51" height="51" fill="#ededed" stroke="#9b9b9b" />
        <rect x="1798" y="274" width="32" height="32" fill="#e1e3e8" stroke="none" />
        <path d="M1812.500 278v21" stroke="#888" strokeWidth="2.500" />
        <path d="M1799 299.500h30M1814 286.500h11" stroke="#cfd1d5" />
        <path d="M1824 299l3-2 2 2zM1821 286l3-2 2 2z" fill="#777" stroke="none" />
      </g>
      <g fontSize="18" fontWeight="700" fill="#e6e6e6" stroke="#8f8f8f" strokeWidth=".7" textAnchor="middle">
        <text x="1814" y="241">北</text>
        <text x="1814" y="354">南</text>
        <text x="1758" y="297">西</text>
        <text x="1870" y="297">东</text>
      </g>
      <rect x="1790.500" y="378" width="47" height="17" rx="4" fill="#e9eaf4" stroke="#f0f0f8" />
      <text x="1794" y="389" fontSize="11" fill="#808080" stroke="none" textLength="24" style={{ fontFamily: '"Liberation Sans", sans-serif' }}>WCS</text>
      <path d="M1824 383.500h9l-4.500 4z" stroke="#a5adbd" fill="#fff" />
      <g stroke="#555">
        <path d="M1835.500 199.500h11v4h-11z" fill="#ddd" />
        <path d="M1858 193.500h8.500v8.500h-2M1855.500 196.500h9v8h-9zM1859 199.500h2.500v2h-2.500z" strokeWidth="1.400" />
        <path d="M1876 194.500l9 9M1885 194.500l-9 9" strokeWidth="4" />
        <path d="M1876.500 195l8 8M1884.500 195l-8 8" stroke="#e5e5e5" strokeWidth="1.500" />
      </g>
      <g stroke="#d3d3d3">
        <rect x="1860" y="419" width="34" height="214" rx="4" fill="#f5f5f5" stroke="#c0c0c0" strokeWidth="2" />
        <circle cx="1887" cy="425" r="3.500" fill="#e3e3e3" />
        <path d="M1885.500 423.500l3 3M1888.500 423.500l-3 3" stroke="#fff" />
        <circle cx="1887" cy="626" r="3.500" fill="#e3e3e3" />
        <path d="M1885 625.500h4M1885 627.500h4" stroke="#fff" />
        <path d="M1877 439.500h10.500v10.500a10.500 10.500 0 1 1-10.500-10.500z" fill="#fafafa" />
        <circle cx="1877" cy="450" r="6" />
        <path d="M1870 457l3-3M1884 457l-3-3" />
        <path d="M1864 476.500h26M1864 584.500h26" />
        <path d="M1874.500 469h6l-3 3zM1874.500 539h6l-3 3zM1874.500 577h6l-3 3z" fill="#cfcfcf" stroke="none" />
        <path d="M1872 504c-2-5-5-8-6-10 0-2 2-2 4 0l2 3-3-11c0-2 2-2 3 0l3 8v-11c0-2 3-2 3 0v11l2-9c1-2 3-2 3 0l-1 11 3-5c1-1 3-1 2 1l-4 12-2 2-1 2h-8z" fill="#fafafa" />
        <path d="M1866 510l14 15M1881 510l-15 15M1866 514v-4h4M1877 510h4v4M1866 521v4h4" />
        <circle cx="1881" cy="524" r="4.500" fill="#fafafa" />
        <path d="M1885 528l4 4" strokeWidth="3" />
        <path d="M1874.500 568v-14h-2l4-6 4 6h-2v14z" fill="#fafafa" />
        <path d="M1880 556c14 2 9 8-3 8M1873 556c-12 3-9 7-2 8M1872 560v7l-4-3.500z" />
        <path d="M1865.500 589.500h5.500v6h-5.500zM1873.500 589.500h5.500v6h-5.500zM1881.500 589.500h5.500v6h-5.500zM1865.500 598.500h16v13h-16z" />
        <path d="M1870 601v8l7-4z" fill="#cfcfcf" />
      </g>
    </svg>
  );
}

function CommandLine() {
  return (
    <div className="absolute top-0 left-0 z-10">
      <div className="absolute top-[745px] left-[340px] flex h-[23px] w-[211px] items-center rounded-[3px] bg-[#7f7f7f] pl-[3px] text-[20px] leading-none font-light whitespace-pre text-white">
        <span className="w-[60px]">命令:</span>
        <span className="w-[145px] pl-[12px] [word-spacing:4px]">&lt;对象捕捉 关&gt;</span>
      </div>
      <div className="absolute top-[773px] left-[265px] flex h-[34px] w-[1243px] items-center rounded-[3px] border-2 border-[#9a9a9a] bg-white">
        <div className="flex h-full w-[66px] items-center bg-gradient-to-b from-[#8e8e8e] to-[#757575]">
          <Svg w={8} h={22} className="ml-[3px]">
            <path d="M1 0v22M5 0v22" stroke="#ccc" strokeWidth="2" strokeDasharray="2 2" />
          </Svg>
          <Svg w={12} h={12} className="ml-[7px]">
            <path d="M1 1l9 10M10 1L1 11" stroke="#fff" strokeWidth="2.500" />
          </Svg>
          <Svg w={20} h={20} className="ml-[12px]">
            <path d="M7 8l9 10" stroke="#f3f3f3" strokeWidth="4" />
            <path d="M6 1c4 1 5 4 3 7S3 10 1 6l4 0 2-2z" fill="#f3f3f3" />
          </Svg>
        </div>
        <div className="ml-[6px] flex h-[20px] w-[19px] items-center justify-center rounded-[2px] border border-[#bbb] bg-gradient-to-b from-[#f3f3f3] to-[#d5dae2]">
          <Svg w={15} h={14}>
            <path d="M2 2l5 4-5 5" stroke="#8b93a0" strokeWidth="1.800" />
            <path d="M8 11.500h6" stroke="#8b93a0" strokeWidth="1.800" />
          </Svg>
        </div>
        <Caret className="ml-[3px] text-[#999]" w={8} h={5} />
        <span className="ml-[10px] grow text-[20px] leading-none font-light text-[#999] italic">键入命令</span>
        <Svg w={9} h={5} className="mr-[5px]"><path d="M0 5h9L4.500 0z" fill="#555" /></Svg>
      </div>
    </div>
  );
}

function LayoutTabs() {
  return (
    <div className="flex h-[21px] bg-[#f0f0f0] text-[14.500px] leading-none text-black">
      <div className="relative flex w-[1158px] items-center border-t border-[#999]">
        <svg className="absolute top-[-1px] left-0" width="260" height="19" viewBox="0 0 260 19" fill="none" stroke="#666">
          <path d="M74 0l7 18h44l6-18z" fill="#fff" stroke="none" />
          <path d="M0 17.500H72M18.500 1v17M36.500 1v17M54.500 1v17" stroke="#999" />
          <path d="M73 .5l7 17h43l7-17M133 17.500h48l7-17M190 17.500h50l7-17" />
          <path d="M6.500 4v11M65.500 4v11" />
          <path d="M13 4v11L8 9.500zM31 4v11l-6-5.500zM41 4v11l6-5.500zM59 4v11l5-5.500z" fill="#555" stroke="none" />
        </svg>
        <span className="relative ml-[87px] w-[49px]">模型</span>
        <span className="relative w-[58px]">布局1</span>
        <span className="relative">布局2</span>
      </div>
      <Svg w={614} h={19}>
        <path d="M0 0h5v18H0zM217 0h21v17h-21z" fill="#cdcdcd" />
        <path d="M18 5l-4 4 4 4M582 5l4 4-4 4" stroke="#444" strokeWidth="2" />
      </Svg>
    </div>
  );
}

function Workspace() {
  return (
    <div className="flex h-[824px] border-b border-[#888]">
      <Palette />
      <div className="flex w-[1775px] flex-col border-r-2 border-[#f5f5f5] bg-white">
        <div className="relative flex h-[803px]">
          <Drawing />
          <span className="absolute top-[4px] left-[4px] text-[13.500px] leading-[18px] tracking-[-0.800px] whitespace-nowrap">[−][俯视][二维线框]</span>
          <CommandLine />
          <div className="ml-[1753px] flex w-[19px] flex-col items-center justify-between bg-[#f0f0f0] py-[7px]">
            <Svg w={12} h={8}><path d="M2 7l4-5 4 5" stroke="#444" strokeWidth="2" /></Svg>
            <div className="mt-[186px] h-[21px] w-[19px] bg-[#cdcdcd]" />
            <Svg w={12} h={8} className="mt-[180px]"><path d="M2 1l4 5 4-5" stroke="#444" strokeWidth="2" /></Svg>
          </div>
        </div>
        <LayoutTabs />
      </div>
    </div>
  );
}

/* ---------- status bar ---------- */

const statusIcons: { on?: boolean; art: ReactNode }[] = [
  { on: true, art: <><path d="M1 7.500h10M5.500 2v10M9.500 5v5" stroke="#234" strokeWidth="1.200" /><circle cx="13" cy="8" r="2.300" stroke="#2668b0" /><rect x="9.500" y="11.500" width="3" height="3" stroke="#e06a1a" /></> },
  { art: <path d="M4 3.500h8M4 6.500h8M4 9.500h8M4 13.500h8M13.500 3v11" stroke="#222" strokeDasharray="1 2" /> },
  { art: <path d="M1.500 1.500h14v14h-14zM5 1v14M8.500 1v14M12 1v14M1 5h14M1 8.500h14M1 12h14" stroke="#444" fill="#eee" /> },
  { art: <path d="M2.500 1v14H16M3 9h6v6" stroke="#334" /> },
  { art: <><circle cx="7" cy="9" r="4.500" stroke="#333" /><path d="M7 9l6-7M7 9h7M12.500 4v7" stroke="#222" /></> },
  { art: <><path d="M3.500 3.500h12v12h-12z" fill="#f5f5f5" stroke="#555" /><circle cx="3" cy="3" r="2" stroke="#e8601a" fill="#fff" /></> },
  { art: <><path d="M5 4l3-3h8v9l-3 3H5z" fill="#f5f5f5" stroke="#555" /><circle cx="3" cy="13" r="2" stroke="#e8601a" fill="#fff" /></> },
  { on: true, art: <path d="M12 3L5 13h9" stroke="#123" strokeWidth="1.300" /> },
  { on: true, art: <><path d="M2.500 1v13.500H16M2 14L10 6" stroke="#456" /><path d="M13 1L9 6h3l-1 4 4-5h-3z" fill="#f39a1c" /></> },
  { on: true, art: <path d="M1 7.500h8M5.500 3v8M9.500 8.500h6v3h-6z" stroke="#111" strokeWidth="1.300" /> },
  { art: <><path d="M2 9h7V2" stroke="#000" strokeWidth="2" /><path d="M9 9h7M9 9v5" stroke="#444" /></> },
  { on: true, art: <><rect x="1.500" y=".5" width="14" height="15" fill="#b5d6f2" stroke="#1c63c0" strokeWidth="1.600" /><path d="M3 4h11M3 8h11M3 12h11" stroke="#7fb0e0" strokeWidth="2" strokeDasharray="2 2" /></> },
  { art: <><path d="M5.500 3.500h6v9h-6z" fill="#fff" stroke="#000" strokeWidth="1.300" /><path d="M7 6h3M7 8h3M7 10h3" stroke="#000" /></> },
  { art: <><path d="M0 4h6M3 1v6M5.500 5.500h7v6h-7z" stroke="#444" fill="#ddd" /><rect x="8.500" y="8.500" width="7" height="7" fill="#76b356" stroke="#2c6a1e" /></> },
  { art: <path d="M6 1h5v4.500h5v5h-5V15H6v-4.500H1v-5h5z" fill="#f2f2f2" stroke="#333" strokeWidth="1.200" /> },
];

const offCell = "bg-gradient-to-b from-[#c2c2c2] to-[#a2a2a2]";
const onCell = "bg-gradient-to-b from-[#e3f4f7] to-[#85c1d2]";

function StatusText({ w, children, on = false }: { w: string; children: ReactNode; on?: boolean }) {
  return <div className={"flex h-full items-end justify-center border-r border-[#666] pt-[5px] pb-px text-[14.500px] leading-[14px] whitespace-nowrap text-black " + w + " " + (on ? onCell : offCell)}>{children}</div>;
}

function StatusIcon({ children, dim = false }: { children: ReactNode; dim?: boolean }) {
  return (
    <div className={"flex h-full w-[22px] items-center justify-center border-r border-[#666] " + offCell + (dim ? " opacity-90" : "")}>
      <Svg w={17} h={16}>{children}</Svg>
    </div>
  );
}

function StatusBar() {
  return (
    <div className="flex h-[22px] border-t border-black bg-gradient-to-b from-[#9a9a9a] to-[#7e7e7e]">
      <div className={"ml-[4px] flex w-[100px] items-center gap-[7px] pl-[3px] text-black " + offCell}>
        <span className="pt-[5px] text-[14.500px] leading-none">比例</span>
        <span className="pt-[6px] font-['Liberation_Mono'] text-[14px] leading-none tracking-[-0.500px]">1:0.1</span>
        <Caret className="mb-[6px] text-black" w={7} h={5} />
      </div>
      <div className="flex w-[286px] items-center bg-gradient-to-b from-[#8f8f8f] to-[#7b7b7b] pt-px pl-[7px] font-['Liberation_Mono'] text-[14px] whitespace-pre text-black">
        <span className="origin-left scale-x-[0.952]">77798.019, -11381.701, 0.000</span>
      </div>
      {statusIcons.map((s, i) => (
        <div key={i} className={"flex h-full w-[22px] items-center justify-center border-r border-[#666] " + (s.on ? onCell : offCell)}>
          <Svg w={17} h={16}>{s.art}</Svg>
        </div>
      ))}
      <div className="w-[625px]" />
      <StatusText w="w-[36px]">模型</StatusText>
      <StatusIcon><path d="M3.500 1.500h10v10h-10zM9 9V4L6 9zM1 14h15" fill="#fff" stroke="#333" strokeWidth="1.300" /></StatusIcon>
      <StatusIcon><path d="M1.500 1.500h6v7h-6zM9.500 1.500h6v7h-6zM1 11h15M1 14h15" fill="#f2f2f2" stroke="#333" strokeWidth="1.300" /></StatusIcon>
      <div className="w-[22px]" />
      <div className={"flex w-[60px] items-center border-r border-[#666] pl-[2px] text-black " + offCell}>
        <ScaleFigure w={16} h={16} />
        <span className="ml-[3px] pt-[6px] font-['Liberation_Mono'] text-[14px] leading-none tracking-[-0.500px]">1:1</span>
        <Caret className="mb-[5px] ml-[4px] text-black" w={7} h={5} />
      </div>
      <StatusIcon><path d="M7 1l-3 8-3 6 6-3 5 2-3-6z" fill="#f4f4f4" stroke="#333" /><circle cx="13" cy="10" r="3" fill="#ffd75e" stroke="#e88b1a" /></StatusIcon>
      <StatusIcon dim><path d="M9 1l-3 8-4 6 7-3 6 3-4-6zM2 2l5 5" fill="#bbb" stroke="#777" /></StatusIcon>
      <div className="w-[6px]" />
      <StatusIcon><circle cx="8" cy="8" r="6.500" stroke="#333" strokeWidth="2.500" strokeDasharray="2.500 1.600" /><circle cx="8" cy="8" r="5.500" fill="#eee" stroke="#333" /><circle cx="8" cy="8" r="2" fill="#999" stroke="#333" /></StatusIcon>
      <StatusIcon><path d="M1.500 7.500h9v8h-9z" fill="#eee" stroke="#222" strokeWidth="1.300" /><path d="M9 7V3c0-3 6-3 6 0v4M6 10v4" stroke="#222" strokeWidth="1.500" /></StatusIcon>
      <StatusIcon><circle cx="8" cy="8" r="6" fill="#777" /><path d="M5 5l4 3 3-5" stroke="#ddd" strokeWidth="2" /></StatusIcon>
      <StatusText w="w-[36px]" on>编组</StatusText>
      <StatusText w="w-[36px]">基线</StatusText>
      <StatusText w="w-[36px]">填充</StatusText>
      <StatusText w="w-[36px]">加粗</StatusText>
      <StatusText w="w-[66px]">动态标注</StatusText>
      <div className="flex w-[52px] items-center justify-center gap-[6px] border-r border-[#444] bg-[#8f8f8f] pr-[8px]">
        <Svg w={17} h={16}><path d="M1 1h8l3 3v10H1z" fill="#3c7fc0" stroke="#124" /><path d="M1 9h9v5H1z" fill="#f0c93c" /><path d="M6 11l4 4 6-7" stroke="#3aa61a" strokeWidth="2.500" /></Svg>
        <Svg w={12} h={18}><circle cx="6" cy="6" r="5" fill="#fff0a8" stroke="#8a7a30" /><path d="M4 11h4v5H4z" fill="#ddd" stroke="#555" /></Svg>
      </div>
      <div className={"flex w-[11px] items-center justify-center border-r border-[#444] " + offCell}><Caret className="text-black" w={6} h={5} /></div>
      <div className={"flex grow items-center justify-center " + offCell}>
        <Svg w={15} h={15}><path d="M.5.500h13v13H.5z" fill="#f4f6fa" stroke="#444" /><path d="M1 2.500h12" stroke="#5a6780" strokeWidth="3" /></Svg>
      </div>
    </div>
  );
}

/* ---------- windows taskbar ---------- */

function TaskItem({ w, active = false, line = false, children }: { w: string; active?: boolean; line?: boolean; children: ReactNode }) {
  return (
    <div className={"flex h-full flex-col items-center " + w + (active ? " bg-[#3b3b3b]" : "")}>
      <div className="flex h-[47px] items-center justify-center pt-[3px]">{children}</div>
      <div className={"h-[3px] " + (active ? "w-full " : "w-[51px] ") + (line ? "bg-[#76b9ed]" : "")} />
    </div>
  );
}

function Taskbar() {
  return (
    <div className="flex h-[50px] items-center bg-[#0a0909] pr-[8px] text-white">
      <div className="flex w-[60px] justify-center">
        <Svg w={22} h={20}>
          <path d="M1 3l8-1v8H1zM10 1.800L21 0v10H10zM1 11h8v8l-8-1zM10 11h11v9l-11-1.600z" fill="#fff" />
        </Svg>
      </div>
      <div className="flex h-full w-[430px] items-center bg-[#f2f2f2] pl-[11px] text-[#222]">
        <div className="size-[27px] rounded-full border-[4px] border-black" />
        <span className="ml-[12px] grow text-[19px] leading-none">在这里输入你要搜索的内容</span>
        <Svg w={16} h={22} className="mr-[18px]">
          <rect x="5" y="1" width="6" height="12" rx="2.500" stroke="#222" strokeWidth="1.500" />
          <path d="M1.500 9v3c0 3 3 5 6.500 5s6.500-2 6.500-5V9M8 17v4M4 21h8" stroke="#222" strokeWidth="1.500" />
        </Svg>
      </div>
      <TaskItem w="w-[62px]"><Svg w={22} h={20} className="-ml-[2px]">
        <path d="M1 1v3h13V1M1 19v-3h13v3M1.500 6.500h12v7h-12z" stroke="#fff" strokeWidth="1.400" />
        <path d="M18.500 1v18" stroke="#fff" strokeWidth="1.400" strokeDasharray="4 2" />
        <path d="M17 7h4v4h-4z" fill="#fff" />
      </Svg></TaskItem>
      <TaskItem w="w-[62px] ml-px" line><Svg w={30} h={30}>
        <rect width="30" height="30" rx="4" fill="#1c1617" />
        <path d="M20 0h6q4 0 4 4v5zM0 19v7q0 4 4 4h6z" fill="#5c0a14" />
        <path d="M1 11l8-4 6-4-1 3c5 0 9 2 11 6l2 3-1 2-5-1-2-1-3 1 3 3-2 1-5-3-5 1-4-1 2-2-3-1 3-1z" fill="#d8232a" />
        <path d="M3 20c5-1 9 2 14 2M3 23c4 0 7 2 12 2M5 27c4 0 7-1 10-2" stroke="#b81c24" strokeWidth="1.500" />
      </Svg></TaskItem>
      <TaskItem w="w-[62px]"><Svg w={28} h={19}>
        <rect x=".5" y=".5" width="27" height="18" rx="1" fill="#36a9e8" stroke="#1b77b5" />
        <circle cx="9" cy="8" r="5" fill="#e9f6fd" />
        <path d="M9 8V3a5 5 0 0 1 4 8z" fill="#f3a32a" />
        <path d="M18 4h7M18 7h7M18 10h7" stroke="#d8f0fc" strokeWidth="1.500" />
        <path d="M4 15.500h10" stroke="#f3a32a" strokeWidth="1.500" />
        <path d="M14 15.500h10" stroke="#fff" />
      </Svg></TaskItem>
      <TaskItem w="w-[62px]" line><Svg w={28} h={24}>
        <path d="M0 0h12l2 3h13v20H0z" fill="#fde28b" />
        <path d="M0 0h12l1 4H0z" fill="#f5b922" />
        <path d="M3 1.500h5" stroke="#fff" />
        <path d="M5 24V13h18v11h-5v-6h-8v6z" fill="#3cb0e6" />
      </Svg></TaskItem>
      <TaskItem w="w-[62px]"><Svg w={28} h={28}>
        <path d="M3 22V8c0-6 8-6 9 0l3 12c1 6 9 6 9 0V10" stroke="#fff" strokeWidth="4.500" />
      </Svg></TaskItem>
      <TaskItem w="w-[62px]" line><Svg w={28} h={28}>
        <path d="M13 4h14v20H13z" fill="#fff" stroke="#2b579a" />
        <path d="M16 8h9M16 11h9M16 14h9M16 17h9M16 20h9" stroke="#2b579a" strokeWidth="1.500" />
        <path d="M0 4l16-3v26L0 24z" fill="#2b579a" />
        <text x="1.500" y="18.500" fontSize="13" fontWeight="700" fill="#fff" stroke="none">W</text>
      </Svg></TaskItem>
      <TaskItem w="w-[61px]" active line><Svg w={30} h={30}>
        <defs>
          <linearGradient id="acad" x1="0" y1="1" x2="1" y2="0">
            <stop offset="0" stopColor="#e02222" />
            <stop offset=".5" stopColor="#f08a8a" />
            <stop offset="1" stopColor="#fff" />
          </linearGradient>
        </defs>
        <path d="M0 0h30v30H0z" fill="url(#acad)" />
        <path d="M14 2h3l8 19-6 1-2-4-4 0-2 4-5-1z" fill="#c0200f" />
        <path d="M6 20l7-8 9 2 3 7-6-3-7 0-3 4z" fill="#4d0906" />
      </Svg></TaskItem>
      <div className="grow" />
      <Svg w={19} h={24}>
        <circle cx="6" cy="12" r="3.300" stroke="#fff" strokeWidth="1.500" />
        <path d="M1 22c0-8 10-8 10 0" stroke="#fff" strokeWidth="1.500" />
        <circle cx="13" cy="5" r="3.300" stroke="#fff" strokeWidth="1.500" />
        <path d="M10 10c4-3 8 0 8 5" stroke="#fff" strokeWidth="1.500" />
      </Svg>
      <Svg w={16} h={10} className="ml-[27px]"><path d="M1 9l7-8 7 8" stroke="#fff" strokeWidth="1.500" /></Svg>
      <Svg w={19} h={14} className="ml-[12px]">
        <path d="M1 4.500h3l4-4v13l-4-4H1zM11 4l6 6M17 4l-6 6" stroke="#fff" strokeWidth="1.300" />
      </Svg>
      <Svg w={21} h={18} className="ml-[11px]">
        <path d="M5 2.500h15v10H4M12 13v3M8 16.500h9M1 1h5v4H1zM3.500 5v11" stroke="#fff" strokeWidth="1.300" />
      </Svg>
      <span className="ml-[10px] w-[16px] text-[16px] leading-none font-bold">英</span>
      <div className="ml-[18px] flex h-[19px] w-[19px] -rotate-6 items-center justify-center rounded-[4px] bg-[#f4511e] text-[17px] leading-none font-bold">S</div>
      <div className="ml-[14px] flex w-[93px] flex-col items-center text-[15px] leading-[23px]">
        <span className="tracking-[0.300px]">22:49</span>
        <span className="tracking-[0.400px]">2019/5/14</span>
      </div>
      <div className="relative ml-[14px] h-[44px] w-[44px]">
        <Svg w={20} h={22} className="mt-[12px] ml-[2px]">
          <path d="M0 0h20v16h-6l-4 4v-4H0z" fill="#fff" />
          <path d="M4 4.500h12M4 8h12M4 11.500h12" stroke="#222" strokeWidth="1.500" />
        </Svg>
        <div className="absolute top-[21px] left-[11px] flex size-[20px] items-center justify-center rounded-full border border-[#888] bg-[#333] text-[14px] leading-none font-bold">4</div>
      </div>
    </div>
  );
}

export default function App() {
  return (
    <div className="relative h-[1080px] w-[1920px] overflow-hidden bg-[#676767] font-['Open_Sans','Noto_Sans_CJK_SC',sans-serif]">
      <TitleBar />
      <TabBar />
      <AppButton />
      <Ribbon />
      <div className="flex h-[7px] flex-col justify-end">
        <div className="h-[3px] border-t border-[#9a9a9a]" />
      </div>
      <Workspace />
      <StatusBar />
      <Taskbar />
    </div>
  );
}
